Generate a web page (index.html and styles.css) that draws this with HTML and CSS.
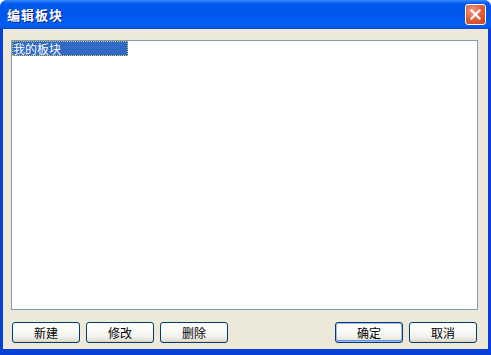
FILE: index.html
```html
<!DOCTYPE html>
<html lang="zh-CN">
<head>
    <meta charset="UTF-8">
    <meta name="viewport" content="width=device-width, initial-scale=1.0">
    <title>编辑板块</title>
    <link rel="stylesheet" href="styles.css">
</head>
<body>
    <div class="window">
        <div class="titlebar">
            <span class="title">编辑板块</span>
            <button class="close" aria-label="关闭">
                <svg width="11" height="11" viewBox="0 0 11 11">
                    <path d="M1.5 1.5 L9.5 9.5 M9.5 1.5 L1.5 9.5" stroke="#fff" stroke-width="2.2" stroke-linecap="square"/>
                </svg>
            </button>
        </div>
        <div class="client">
            <div class="listbox">
                <div class="item selected">我的板块</div>
            </div>
            <div class="buttons">
                <div class="group">
                    <button class="btn">新建</button>
                    <button class="btn">修改</button>
                    <button class="btn">删除</button>
                </div>
                <div class="group">
                    <button class="btn default">确定</button>
                    <button class="btn">取消</button>
                </div>
            </div>
        </div>
    </div>
</body>
</html>
```

FILE: styles.css
```css
body {
    margin: 0;
    font-family: "Noto Sans CJK SC", "Liberation Sans", sans-serif;
    font-size: 12px;
}
.window {
    width: 491px;
    height: 355px;
    box-sizing: border-box;
    background: #0841d8;
    border-radius: 7px 7px 0 0;
    display: flex;
    flex-direction: column;
    overflow: hidden;
}
.titlebar {
    height: 29px;
    flex: none;
    display: flex;
    align-items: center;
    justify-content: space-between;
    padding: 0 5px 0 7px;
    background: linear-gradient(#3c8cf9 0, #0a5ff3 3px, #0058ee 5px, #0055ea 14px, #0060f6 24px, #0453e0 28px, #0846d9 29px);
}
.title {
    color: #fff;
    font-weight: bold;
    font-size: 13px;
    text-shadow: 1px 1px 0 #0a1f80;
    letter-spacing: 1px;
}
.close {
    width: 21px;
    height: 21px;
    padding: 0;
    border: 1px solid #fff;
    border-radius: 3px;
    background: radial-gradient(circle at 35% 30%, #f0a08a 0, #e4633c 45%, #c8401a 100%);
    display: flex;
    align-items: center;
    justify-content: center;
}
.client {
    flex: 1;
    margin: 0 3px 6px 3px;
    background: #ece9d8;
    padding: 11px 10px 0 8px;
    display: flex;
    flex-direction: column;
}
.listbox {
    height: 268px;
    background: #fff;
    border: 1px solid #7f9db9;
}
.item {
    height: 15px;
    line-height: 15px;
    padding-left: 1px;
    width: 115px;
    white-space: nowrap;
}
.selected {
    background: #316ac5;
    color: #fff;
    outline: 1px dotted #d6c55a;
    outline-offset: -1px;
}
.buttons {
    display: flex;
    justify-content: space-between;
    margin-top: 12px;
    padding: 0 1px 0 1px;
}
.group {
    display: flex;
    gap: 6px;
}
.btn {
    width: 68px;
    height: 21px;
    padding: 0;
    font-family: inherit;
    font-size: 12px;
    color: #000;
    border: 1px solid #003c74;
    border-radius: 3px;
    background: linear-gradient(#ffffff 0, #fbfbf9 40%, #f0efe8 75%, #e3e0d4 92%, #d6d0c5 100%);
}
.default {
    box-shadow: inset 0 0 0 1px #9fbdf0, inset 0 -1px 0 1px #6a8fe0;
}
```
